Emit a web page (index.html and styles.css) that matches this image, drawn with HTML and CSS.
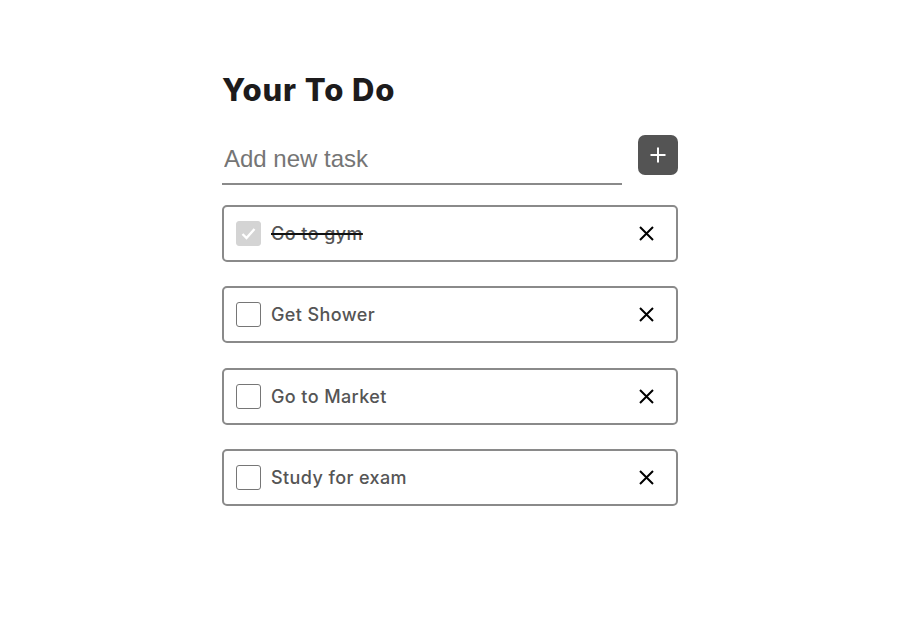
FILE: index.html
```html
<!DOCTYPE html>
<html lang="en">
<head>
<meta charset="utf-8">
<title>Your To Do</title>
<link rel="stylesheet" href="styles.css">
</head>
<body>
<main class="app">
  <h1 class="title">Your To Do</h1>
  <form class="add-row">
    <input class="add-input" type="text" placeholder="Add new task">
    <button class="add-btn" type="button" aria-label="Add">
      <svg width="18" height="18" viewBox="0 0 18 18"><path d="M9 1.5v15M1.5 9h15" stroke="#fff" stroke-width="2" fill="none"/></svg>
    </button>
  </form>
  <ul class="list">
    <li class="item done">
      <span class="check checked"><svg width="17" height="17" viewBox="0 0 17 17"><path d="M2.5 9l4 4 8-9" stroke="#fff" stroke-width="2.4" fill="none"/></svg></span>
      <span class="label">Go to gym</span>
      <button class="del" type="button" aria-label="Delete"><svg width="15" height="15" viewBox="0 0 15 15"><path d="M1 1l13 13M14 1L1 14" stroke="#000" stroke-width="2" fill="none"/></svg></button>
    </li>
    <li class="item">
      <span class="check"></span>
      <span class="label">Get Shower</span>
      <button class="del" type="button" aria-label="Delete"><svg width="15" height="15" viewBox="0 0 15 15"><path d="M1 1l13 13M14 1L1 14" stroke="#000" stroke-width="2" fill="none"/></svg></button>
    </li>
    <li class="item">
      <span class="check"></span>
      <span class="label">Go to Market</span>
      <button class="del" type="button" aria-label="Delete"><svg width="15" height="15" viewBox="0 0 15 15"><path d="M1 1l13 13M14 1L1 14" stroke="#000" stroke-width="2" fill="none"/></svg></button>
    </li>
    <li class="item">
      <span class="check"></span>
      <span class="label">Study for exam</span>
      <button class="del" type="button" aria-label="Delete"><svg width="15" height="15" viewBox="0 0 15 15"><path d="M1 1l13 13M14 1L1 14" stroke="#000" stroke-width="2" fill="none"/></svg></button>
    </li>
  </ul>
</main>
</body>
</html>
```

FILE: styles.css
```css
* { box-sizing: border-box; }
html, body { margin: 0; padding: 0; background: #fff; }
body { font-family: "Inter", "DejaVu Sans", sans-serif; }

.app {
  width: 456px;
  margin: 0 auto;
  padding-top: 68px;
}

.title {
  margin: 0;
  font-size: 31px;
  line-height: 44px;
  font-weight: 800;
  color: #1d1b1c;
  letter-spacing: 0.9px;
}

.add-row {
  display: flex;
  align-items: flex-start;
  justify-content: space-between;
  margin-top: 23px;
}

.add-input {
  width: 400px;
  height: 50px;
  border: none;
  border-bottom: 2px solid #8a8a8a;
  outline: none;
  padding: 0 2px;
  font-family: "Liberation Sans", Arial, sans-serif;
  font-size: 24px;
  color: #333;
  background: transparent;
}
.add-input::placeholder { color: #757575; }

.add-btn {
  width: 40px;
  height: 40px;
  border: none;
  border-radius: 7px;
  background: #545454;
  display: flex;
  align-items: center;
  justify-content: center;
  padding: 0;
}
.add-btn svg { display: block; }

.list {
  list-style: none;
  margin: 20px 0 0;
  padding: 0;
  display: flex;
  flex-direction: column;
  gap: 24.4px;
}

.item {
  height: 57px;
  border: 2px solid #8a8a8a;
  border-radius: 5px;
  display: flex;
  align-items: center;
  padding: 0 22px 0 12px;
}

.check {
  width: 25px;
  height: 25px;
  border: 1px solid #767676;
  border-radius: 3px;
  background: #fff;
  flex: none;
  display: flex;
  align-items: center;
  justify-content: center;
}
.check.checked {
  background: #d4d4d4;
  border-color: #d4d4d4;
}
.check svg { display: block; }

.label {
  flex: 1;
  margin-left: 10px;
  font-size: 18px;
  font-weight: 500;
  letter-spacing: 0.4px;
  color: #555;
}
.done .label {
  text-decoration: line-through;
  text-decoration-color: #111;
  text-decoration-thickness: 2px;
}

.del {
  border: none;
  background: transparent;
  padding: 0;
  width: 15px;
  height: 15px;
  display: flex;
}
.del svg { display: block; }
```
